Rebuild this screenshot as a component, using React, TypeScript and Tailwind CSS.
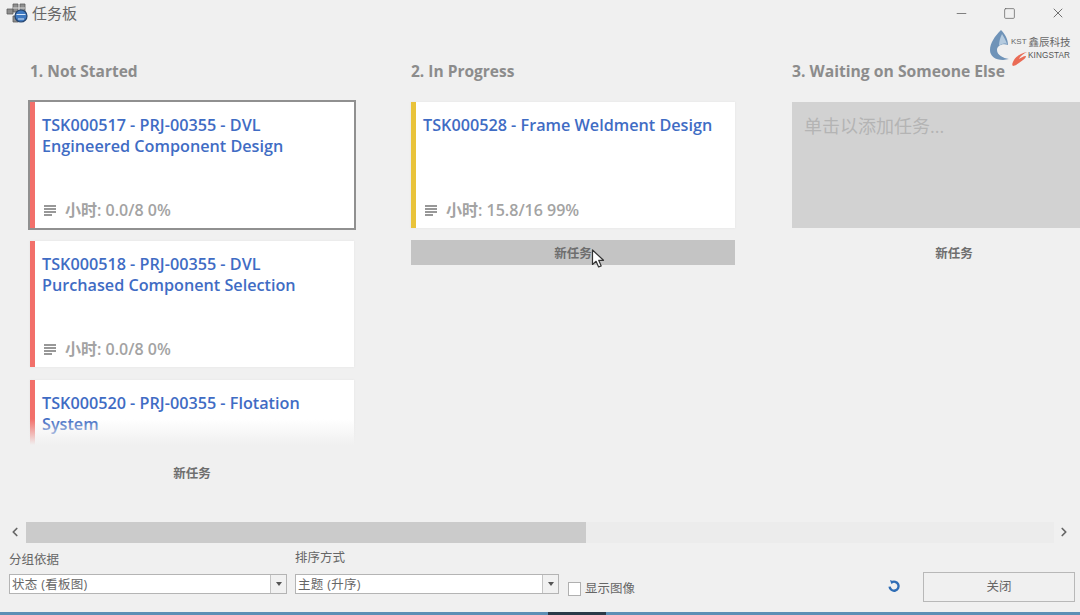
import { ChevronLeft, ChevronRight, Minus, Square, X } from "lucide-react";

const latin = "font-['Open_Sans','Noto_Sans_CJK_SC',sans-serif]";

type Task = { title: string; hours?: string; bar: string; selected?: boolean };

const notStarted: Task[] = [
  { title: "TSK000517 - PRJ-00355 - DVL Engineered Component Design", hours: "0.0/8 0%", bar: "bg-[#f2706a]", selected: true },
  { title: "TSK000518 - PRJ-00355 - DVL Purchased Component Selection", hours: "0.0/8 0%", bar: "bg-[#f2706a]" },
  { title: "TSK000520 - PRJ-00355 - Flotation System", bar: "bg-[#f2706a]" },
];

function LinesIcon() {
  return (
    <svg width="13" height="11" viewBox="0 0 13 11" className="shrink-0">
      <path d="M0 1h12M0 4h12M0 7h12M0 10h8" stroke="#777" strokeWidth="1.3" />
    </svg>
  );
}

function TaskCard({ task }: { task: Task }) {
  return (
    <div className={`relative flex h-[126px] w-[324px] shrink-0 bg-white ${task.selected ? "outline-2 outline-offset-0 outline-[#909090]" : "shadow-[0_0_2px_#e2e2e2]"}`}>
      <div className={`w-[5px] shrink-0 ${task.bar}`} />
      <div className="flex flex-1 flex-col justify-between pt-[13px] pb-[8px] pl-[7px] pr-2">
        <div className="w-[296px] text-[16.2px] leading-[21px] font-semibold text-[#3f6cc4]">{task.title}</div>
        {task.hours && (
          <div className="flex items-center gap-[8px] text-[16px] leading-5 font-semibold text-[#a3a3a3]">
            <span className="ml-[2px]"><LinesIcon /></span>
            <span>小时: {task.hours}</span>
          </div>
        )}
      </div>
    </div>
  );
}

function NewTask({ active }: { active?: boolean }) {
  return (
    <div className={`relative flex h-[25px] w-[324px] items-center justify-center pt-[3px] text-[12.5px] font-semibold text-[#6e6e6e] ${active ? "bg-[#c4c4c4]" : ""}`}>
      新任务
      {active && (
        <svg width="15" height="20" viewBox="0 0 15 20" className="absolute left-[180px] top-[9px]">
          <path d="M1.5 1v14.5l3.6-3.2 2.5 5.7 2.6-1.1-2.5-5.6h4.8z" fill="#fff" stroke="#333" strokeWidth="1.2" strokeLinejoin="round" />
        </svg>
      )}
    </div>
  );
}

function Dropdown({ text, width }: { text: string; width: string }) {
  return (
    <div className={`flex h-[20px] items-stretch border border-[#b4b4b4] bg-white ${width}`}>
      <div className="flex-1 pl-[2px] text-[12.5px] leading-[19px] tracking-[0.3px] text-[#666]">{text}</div>
      <div className="flex w-[16px] items-center justify-center border-l border-[#c4c4c4] bg-[#f1f1f1]">
        <div className="h-0 w-0 border-x-[3.5px] border-t-[4px] border-x-transparent border-t-[#555]" />
      </div>
    </div>
  );
}

function AppIcon() {
  return (
    <svg width="22" height="22" viewBox="0 0 22 22">
      <path d="M7 2h5v8H7zM14 2h5v8h-5zM1 7h6v5H1zM7 14h5v6H7z" fill="#8e8e8e" stroke="#5e5e5e" strokeWidth="0.8" strokeLinejoin="round" />
      <path d="M7 6h12" stroke="#d8d8d8" strokeWidth="1" />
      <circle cx="15" cy="14" r="6" fill="#3f79c0" stroke="#25456f" strokeWidth="1.2" />
      <path d="M10.5 12.5h9M12 17h6" stroke="#d6e5f5" strokeWidth="1.2" />
    </svg>
  );
}

function Logo() {
  return (
    <div className="absolute left-[989px] top-[28px] h-[40px] w-[84px]">
      <svg width="44" height="40" viewBox="0 0 44 40">
        <path d="M12 2C6 8 1 15 1 22c0 6 5 10 13 10l6-1c-6-1-12-4-12-9 0-4 5-7 11-5 0-6-3-11-7-15z" fill="#6f93b8" />
        <path d="M13 6c2 3 4 7 5 10-3-1-6 0-8 2 0-4 1-8 3-12z" fill="#b5cbdf" />
        <path d="M38 24c-6 1-12 5-14 10-1 2-1 3 0 4 4-1 7-4 10-6 2-1 3-3 3-4-3 0-5 2-7 3 1-3 4-5 8-7z" fill="#ea6b55" />
      </svg>
      <div className="absolute left-[22px] top-[6px] flex items-center gap-[2px] whitespace-nowrap text-[#666]">
        <span className="font-['Liberation_Sans',sans-serif] text-[8px]">KST</span>
        <span className="font-['Noto_Sans_CJK_SC',sans-serif] text-[10.5px]">鑫辰科技</span>
      </div>
      <div className="absolute left-[39px] top-[22px] font-['Liberation_Sans',sans-serif] text-[8.2px] tracking-[0.1px] text-[#555]">KINGSTAR</div>
    </div>
  );
}

export default function App() {
  return (
    <div className={`relative flex h-[615px] w-[1080px] flex-col overflow-hidden bg-[#f0f0f0] ${latin}`}>
      {/* title bar */}
      <div className="flex h-[26px] shrink-0 items-center pl-[6px] pr-[14px]">
        <AppIcon />
        <span className="ml-[4px] text-[15px] text-[#666]">任务板</span>
        <div className="ml-auto flex items-center gap-[34px] text-[#666]">
          <Minus size={15} strokeWidth={1.3} />
          <Square size={13} strokeWidth={1.4} />
          <X size={16} strokeWidth={1.4} />
        </div>
      </div>
      <Logo />

      {/* board */}
      <div className="flex h-[495px] shrink-0 gap-[57px] overflow-hidden pl-[30px] pt-[35px]">
        <div className="flex w-[324px] shrink-0 flex-col">
          <h2 className="h-[21px] text-[15.5px] leading-[21px] font-bold text-[#8c8c8c]">1. Not Started</h2>
          <div className="relative -mx-[2px] mt-[18px] h-[345px] overflow-hidden px-[2px] pt-[2px]">
            <div className="flex flex-col gap-[13px]">
              {notStarted.map((t) => (
                <TaskCard key={t.title} task={t} />
              ))}
            </div>
            <div className="absolute bottom-0 left-0 right-0 h-[26px] bg-gradient-to-b from-transparent to-[#f0f0f0]" />
            <div className="absolute left-[331px] top-[2px] h-[115px] w-[4px] bg-[#d2d2d2]" />
          </div>
          <div className="mt-[15px]"><NewTask /></div>
        </div>

        <div className="flex w-[324px] shrink-0 flex-col">
          <h2 className="h-[21px] text-[15.5px] leading-[21px] font-bold text-[#8c8c8c]">2. In Progress</h2>
          <div className="mt-[20px]">
            <TaskCard task={{ title: "TSK000528 - Frame Weldment Design", hours: "15.8/16 99%", bar: "bg-[#e9c33a]" }} />
          </div>
          <div className="mt-[12px]"><NewTask active /></div>
        </div>

        <div className="flex w-[324px] shrink-0 flex-col">
          <h2 className="h-[21px] text-[15.7px] leading-[21px] font-bold whitespace-nowrap text-[#8c8c8c]">3. Waiting on Someone Else</h2>
          <div className="mt-[20px] h-[126px] bg-[#d2d2d2] px-[12px] py-[11px] text-[18px] text-[#b4b4b4]">单击以添加任务...</div>
          <div className="mt-[12px]"><NewTask /></div>
        </div>
      </div>

      {/* horizontal scrollbar */}
      <div className="flex h-[22px] shrink-0 items-center pl-[8px] pr-[9px]">
        <ChevronLeft size={14} strokeWidth={3} className="text-[#666]" />
        <div className="ml-[4px] flex h-[21px] flex-1 bg-[#ececec]">
          <div className="h-full w-[560px] bg-[#cbcbcb]" />
        </div>
        <ChevronRight size={14} strokeWidth={3} className="ml-[3px] text-[#666]" />
      </div>

      {/* footer */}
      <div className="flex flex-1 items-start pl-[9px] pr-[5px] pt-[7px]">
        <div className="flex w-[278px] shrink-0 flex-col gap-[5px] pt-[1px]">
          <span className="h-[18px] text-[12.5px] leading-[18px] text-[#666]">分组依据</span>
          <Dropdown text="状态 (看板图)" width="w-[278px]" />
        </div>
        <div className="-mt-[1px] ml-[8px] flex w-[264px] shrink-0 flex-col gap-[7px]">
          <span className="h-[18px] text-[12.5px] leading-[18px] text-[#666]">排序方式</span>
          <Dropdown text="主题 (升序)" width="w-[264px]" />
        </div>
        <div className="ml-[9px] mt-[30px] flex items-center gap-[4px]">
          <div className="h-[14px] w-[13px] border border-[#b0b0b0] bg-white" />
          <span className="text-[12.5px] leading-[18px] whitespace-nowrap text-[#666]">显示图像</span>
        </div>
        <svg width="14" height="14" viewBox="0 0 14 14" className="ml-[252px] mt-[29px] shrink-0">
          <path d="M4.5 3.5A4.5 4.5 0 1 1 2.6 7.6" fill="none" stroke="#2f6db5" strokeWidth="2.4" />
          <path d="M3 1l3.4 1.2-2 3z" fill="#2f6db5" />
        </svg>
        <div className="ml-[22px] mt-[22px] flex h-[30px] w-[152px] shrink-0 items-center justify-center border border-[#b8b8b8] text-[12.5px] text-[#666]">关闭</div>
      </div>

      {/* desktop strip under the window */}
      <div className="flex h-[3px] shrink-0 bg-[#5d8fb5]">
        <div className="ml-[548px] w-[58px] bg-[#2b3a48]" />
      </div>
    </div>
  );
}
